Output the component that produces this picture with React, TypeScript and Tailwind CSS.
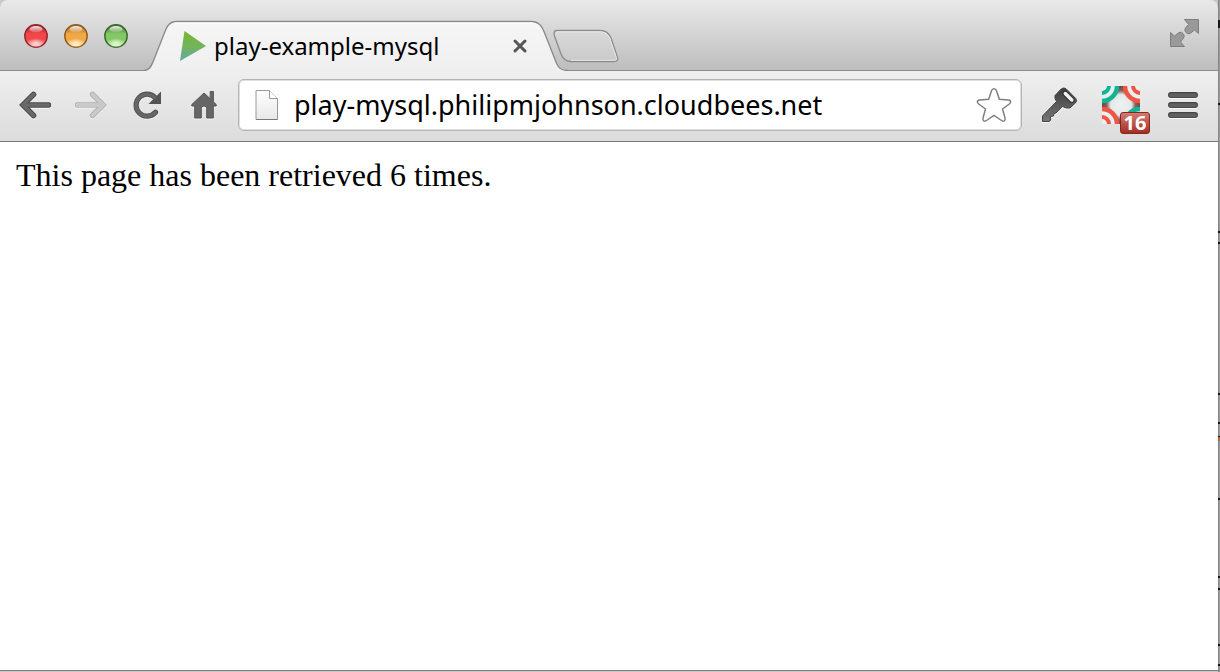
import type { ReactNode } from "react";

function TrafficLight({ id, label, rim, mid, glow }: { id: string; label: string; rim: string; mid: string; glow: string }) {
  return (
    <button type="button" aria-label={label} className="block size-6">
      <svg viewBox="0 0 24 24" className="size-6">
        <defs>
          <linearGradient id={id} x1="0" y1="0" x2="0" y2="1">
            <stop offset="0" stopColor={rim} />
            <stop offset="0.4" stopColor={mid} />
            <stop offset="0.65" stopColor={mid} />
            <stop offset="1" stopColor={glow} />
          </linearGradient>
          <linearGradient id={`${id}-shine`} x1="0" y1="0" x2="0" y2="1">
            <stop offset="0" stopColor="#fff" stopOpacity="0.9" />
            <stop offset="1" stopColor="#fff" stopOpacity="0.1" />
          </linearGradient>
          <radialGradient id={`${id}-glow`}>
            <stop offset="0" stopColor="#fff" stopOpacity="0.65" />
            <stop offset="1" stopColor="#fff" stopOpacity="0" />
          </radialGradient>
        </defs>
        <circle cx="12" cy="12.8" r="11.2" fill="#fff" opacity="0.5" />
        <circle cx="12" cy="12" r="11.2" fill={`url(#${id})`} stroke={rim} strokeWidth="1.4" />
        <ellipse cx="12" cy="19" rx="8" ry="5" fill={`url(#${id}-glow)`} />
        <ellipse cx="12" cy="5.3" rx="6.5" ry="3.2" fill={`url(#${id}-shine)`} />
      </svg>
    </button>
  );
}

function ToolButton({ label, className, children }: { label: string; className: string; children: ReactNode }) {
  return (
    <button type="button" aria-label={label} className={`block shrink-0 ${className}`}>
      {children}
    </button>
  );
}

function TabStrip() {
  return (
    <header className="flex h-[71px] items-start rounded-t-lg bg-linear-to-b from-[#e9e9e9] to-[#bdbdbd] pr-[18px] pl-6 shadow-[inset_0_-1px_0_#8b8b8b]">
      <div className="mt-6 flex gap-4">
        <TrafficLight id="close" label="Close window" rim="#96222a" mid="#f2474a" glow="#ffd0cc" />
        <TrafficLight id="minimize" label="Minimize window" rim="#94591d" mid="#f0a845" glow="#fff3a8" />
        <TrafficLight id="zoom" label="Zoom window" rim="#38692a" mid="#82c865" glow="#e0ffb8" />
      </div>
      <div className="relative ml-4 flex h-[71px] w-[424px] shrink-0 items-center pr-10 pl-9">
        <svg viewBox="0 0 424 71" className="absolute inset-0 h-full w-full">
          <defs>
            <linearGradient id="tab-fill" x1="0" y1="0" x2="0" y2="1">
              <stop offset="0" stopColor="#f6f6f6" />
              <stop offset="1" stopColor="#efefef" />
            </linearGradient>
          </defs>
          <path d="M0 71V70.5C5 70.5 7 67 9 62L20 34C23 26 25 21.500 33 21.500H387C395 21.500 398 26 401 34L412 62C414 67 416 70.500 424 70.500V71Z" fill="url(#tab-fill)" />
          <path d="M0 70.500C5 70.500 7 67 9 62L20 34C23 26 25 21.500 33 21.500H387C395 21.500 398 26 401 34L412 62C414 67 416 70.500 424 70.500" fill="none" stroke="#888" strokeWidth="1.300" />
          <path d="M30 23H389" stroke="#fff" />
        </svg>
        <div className="relative mt-5 flex w-full items-center">
          <svg viewBox="0 0 26 30" className="h-[30px] w-[26px] shrink-0">
            <defs>
              <linearGradient id="play" x1="0" y1="0" x2="0" y2="1">
                <stop offset="0" stopColor="#78b52c" />
                <stop offset="0.5" stopColor="#74b45a" />
                <stop offset="1" stopColor="#5faaa8" />
              </linearGradient>
            </defs>
            <path d="M4.500 0L26 15L0 30Z" fill="url(#play)" />
          </svg>
          <span className="ml-2 text-[24px] leading-8 text-black">play-example-mysql</span>
          <button type="button" aria-label="Close tab" className="ml-auto size-4">
            <svg viewBox="0 0 16 16" className="size-4">
              <path d="M3 3L13 13M13 3L3 13" stroke="#555" strokeWidth="3" strokeLinecap="round" />
            </svg>
          </button>
        </div>
      </div>
      <button type="button" aria-label="New tab" className="relative mt-7 -ml-4 h-9 w-[68px] shrink-0">
        <svg viewBox="0 0 68 36" className="h-9 w-[68px]">
          <defs>
            <linearGradient id="new-tab" x1="0" y1="0" x2="0" y2="1">
              <stop offset="0" stopColor="#d9d9d9" />
              <stop offset="1" stopColor="#cacaca" />
            </linearGradient>
          </defs>
          <path d="M5 2.500H48C54 2.500 57 5 59 10L65 28C66.500 32 65.500 33.500 62 33.500H19C14 33.500 11 31 9 26L2.500 8C1.500 4 2 2.500 5 2.500Z" fill="url(#new-tab)" stroke="#8a8a8a" strokeWidth="1.300" />
          <path d="M5 3.800H48C53 3.800 56 6 58 11L64 28.500C65 31.500 64.500 32.300 62 32.300H19" fill="none" stroke="#e9e9e9" />
        </svg>
      </button>
      <button type="button" aria-label="Enter full screen" className="mt-[18px] ml-auto size-[30px]">
        <svg viewBox="0 0 30 30" className="size-[30px]">
          <g fill="#999" stroke="#7e7e7e" strokeWidth="1">
            <path d="M14.500 1.500H28.500V15.500L24.500 12L20 15.500Q17 16.500 15.500 14Q14 12 15.500 10L18.500 6.500Z" />
            <path d="M.5 14.500L4.500 18L9 14.500Q12 13.500 13.500 16Q15 18 13.500 20L10.500 24L14.500 28.500H.5Z" />
          </g>
        </svg>
      </button>
    </header>
  );
}

function Toolbar() {
  return (
    <nav className="flex h-[71px] items-center border-b border-[#777] bg-linear-to-b from-[#efefef] to-[#dcdcdc] pr-5 pb-0.5 pl-[19px]">
      <ToolButton label="Back" className="h-[30px] w-8">
        <svg viewBox="0 0 32 30" className="h-[30px] w-8">
          <path d="M14.500 4.500L4 15L14.500 25.500M5 15H29.500" fill="none" stroke="#f8f8f8" strokeWidth="5.500" strokeLinecap="round" transform="translate(0 1)" />
          <path d="M14.500 4.500L4 15L14.500 25.500M5 15H29.500" fill="none" stroke="#4b4b4b" strokeWidth="5.600" strokeLinecap="round" />
          <path d="M14.500 4.500L4 15L14.500 25.500M5 15H29.500" fill="none" stroke="#696969" strokeWidth="3.600" strokeLinecap="round" />
        </svg>
      </ToolButton>
      <ToolButton label="Forward" className="ml-6 h-[30px] w-8">
        <svg viewBox="0 0 32 30" className="h-[30px] w-8">
          <path d="M17.500 4.500L28 15L17.500 25.500M27 15H2.500" fill="none" stroke="#f4f4f4" strokeWidth="5.500" strokeLinecap="round" transform="translate(0 1)" />
          <path d="M17.500 4.500L28 15L17.500 25.500M27 15H2.500" fill="none" stroke="#b2b2b2" strokeWidth="5.600" strokeLinecap="round" />
          <path d="M17.500 4.500L28 15L17.500 25.500M27 15H2.500" fill="none" stroke="#c9c9c9" strokeWidth="3.800" strokeLinecap="round" />
        </svg>
      </ToolButton>
      <ToolButton label="Reload" className="ml-[26px] h-[30px] w-[30px]">
        <svg viewBox="0 0 30 30" className="size-[30px]">
          <path d="M22.500 22.500A11 11 0 1 1 21.500 6.500" fill="none" stroke="#f8f8f8" strokeWidth="5" transform="translate(0 1)" />
          <path d="M22.500 22.300A11 11 0 1 1 22 7.500" fill="none" stroke="#545454" strokeWidth="5.200" strokeLinecap="round" />
          <path d="M28 1.500V14H15.500Z" fill="#545454" />
          <path d="M22.500 22.300A11 11 0 1 1 22 7.500" fill="none" stroke="#676767" strokeWidth="3" strokeLinecap="round" />
        </svg>
      </ToolButton>
      <ToolButton label="Home" className="ml-7 h-[30px] w-[26px]">
        <svg viewBox="0 0 26 30" className="h-[30px] w-[26px]">
          <path d="M13 4.500L.5 16V17.500H3.500V29.500H10.500V19.500Q10.500 17.500 13 17.500Q15.500 17.500 15.500 19.500V29.500H22.500V17.500H25.500V16L22.500 13V2.500H19V9.500Z" fill="#f8f8f8" />
          <path d="M13 3L.8 14.500V16H3.700V28H10.300V18.500Q10.300 16 13 16Q15.700 16 15.700 18.500V28H22.300V16H25.200V14.500L22.400 11.800V1.500H19.200V8.700Z" fill="#666" stroke="#555" />
        </svg>
      </ToolButton>
      <form className="ml-[21px] flex h-[52px] min-w-0 flex-1 items-center rounded-md border border-[#b4b4b4] bg-white pr-[9px] pl-[15px] shadow-[inset_0_0_0_1px_#dedede]" onSubmit={(e) => e.preventDefault()}>
        <svg viewBox="0 0 26 34" className="h-[34px] w-[26px] shrink-0">
          <defs>
            <linearGradient id="sheet" x1="0" y1="0" x2="0" y2="1">
              <stop offset="0" stopColor="#fff" />
              <stop offset="1" stopColor="#e8e8e8" />
            </linearGradient>
          </defs>
          <path d="M2 2.500H15.500L23.500 10.500V31.500H2Z" fill="url(#sheet)" stroke="#999" />
          <path d="M2 31.500H23.500" stroke="#777" />
          <path d="M15.500 2.500V10.500H23.500" fill="#fff" stroke="#999" />
        </svg>
        <input
          type="text"
          aria-label="Address"
          defaultValue="play-mysql.philipmjohnson.cloudbees.net"
          className="ml-[14px] h-10 min-w-0 flex-1 bg-transparent text-[27px] text-black outline-none"
        />
        <button type="button" aria-label="Bookmark this page" className="h-9 w-9 shrink-0">
          <svg viewBox="0 0 36 36" className="size-9">
            <path d="M18 1.800Q19.800 1.800 20.500 3.800L23.300 12.300L32.500 13Q34.800 13.400 34.600 15Q34.500 16.100 33.300 17L26.500 22L29 31Q29.500 33 28.300 33.800Q27 34.600 25.500 33.500L18 28.300L10.500 33.500Q9 34.600 7.700 33.800Q6.500 33 7 31L9.500 22L2.700 17Q1.500 16.100 1.400 15Q1.200 13.400 3.500 13L12.700 12.300L15.500 3.800Q16.200 1.800 18 1.800Z" fill="#fff" stroke="#808080" strokeWidth="1.500" />
          </svg>
        </button>
      </form>
      <ToolButton label="Key extension" className="ml-5 h-9 w-9">
        <svg viewBox="0 0 36 36" className="size-9">
          <defs>
            <linearGradient id="key" x1="0" y1="0" x2="0" y2="1">
              <stop offset="0" stopColor="#3c3c3c" />
              <stop offset="1" stopColor="#777" />
            </linearGradient>
          </defs>
          <path d="M0 36V30L14.500 15.500L13 12.500V9L20 1.500Q22 0 24 1.500L34 11.500Q35.500 14 34 15.500L27 22.500H23L20.500 21L14 27.500L12 28L11.500 30.500L8.500 31V35L6.500 36Z" fill="#f8f8f8" />
          <path d="M.5 34.500V29L14.500 14.500L13 11.500V8.500L19.500 1.700Q22 .2 24 1.700L33.800 11.500Q35.300 13.500 33.800 15.500L28 21H24L20.500 19.500L14 26L12 26.500L11.500 29L8.500 29.500V33.500L7 34.500Z" fill="url(#key)" stroke="#444" />
          <path d="M23 6.500L29.500 13" stroke="#333" strokeWidth="5.500" strokeLinecap="round" />
          <path d="M23.300 6.500L29.800 13" stroke="#f2f2f2" strokeWidth="3.500" strokeLinecap="round" />
        </svg>
      </ToolButton>
      <button type="button" aria-label="Extension, 16 notifications" className="relative ml-6 size-[38px] shrink-0">
        <svg viewBox="0 0 38 38" className="size-[38px] overflow-hidden">
          <defs>
            <radialGradient id="star-fill" gradientUnits="userSpaceOnUse" cx="19" cy="19" r="19">
              <stop offset="0" stopColor="#eef2f2" />
              <stop offset="0.55" stopColor="#e4e8e8" />
              <stop offset="0.75" stopColor="#876660" />
              <stop offset="1" stopColor="#6b453e" />
            </radialGradient>
          </defs>
          <rect width="38" height="38" fill="url(#star-fill)" />
          <g fill="#e9eeee" strokeWidth="4.5">
            <circle cx="0" cy="0" r="15" stroke="#12b496" />
            <circle cx="38" cy="0" r="15" stroke="#ee5545" />
            <circle cx="0" cy="38" r="15" stroke="#ee5545" />
            <circle cx="38" cy="38" r="15" stroke="#12b496" />
          </g>
          <g fill="none" strokeWidth="4">
            <circle cx="0" cy="0" r="7" stroke="#12b496" />
            <circle cx="38" cy="0" r="7" stroke="#ee5545" />
            <circle cx="0" cy="38" r="7" stroke="#ee5545" />
            <circle cx="38" cy="38" r="7" stroke="#12b496" />
          </g>
        </svg>
        <span className="absolute top-[26px] left-[18px] flex h-[22px] w-[30px] items-center justify-center rounded-[3px] border border-[#812820] bg-linear-to-b from-[#d27b75] to-[#a52b22] text-xl leading-5 font-bold text-white">16</span>
      </button>
      <ToolButton label="Menu" className="ml-7 h-[30px] w-[30px]">
        <svg viewBox="0 0 30 30" className="size-[30px]">
          <path d="M3 6H27M3 16H27M3 26H27" stroke="#f8f8f8" strokeWidth="6" strokeLinecap="round" />
          <path d="M3 5H27M3 15H27M3 25H27" stroke="#444" strokeWidth="6" strokeLinecap="round" />
          <path d="M3 5.300H27M3 15.300H27M3 25.300H27" stroke="#606060" strokeWidth="4" strokeLinecap="round" />
        </svg>
      </ToolButton>
    </nav>
  );
}

export default function App() {
  return (
    <div className="flex min-h-screen bg-[#c9c9c9] font-['Noto_Sans','Open_Sans',sans-serif]">
      <div className="flex min-w-0 flex-1 flex-col">
        <TabStrip />
        <Toolbar />
        <main className="flex-1 border-b border-[#808080] bg-white px-4 pt-4">
          <p className="font-['Liberation_Serif',serif] text-[32px] leading-[34px] text-black">This page has been retrieved 6 times.</p>
        </main>
        <div className="h-px bg-[#c9c9c9]" />
      </div>
      <svg viewBox="0 0 2 672" preserveAspectRatio="none" className="w-[2px] shrink-0 bg-[#999]">
        <path d="M0 0V672" stroke="#777" />
        <path d="M1 20V28M0 104H2M0 232H2M0 243H2M0 394H2M0 423H2M0 437H2M0 499H2M0 577H2M0 589H2M0 645H2M0 665H2" stroke="#151515" strokeWidth="2" />
        <path d="M1 437V441" stroke="#b5613f" strokeWidth="2" />
      </svg>
    </div>
  );
}
